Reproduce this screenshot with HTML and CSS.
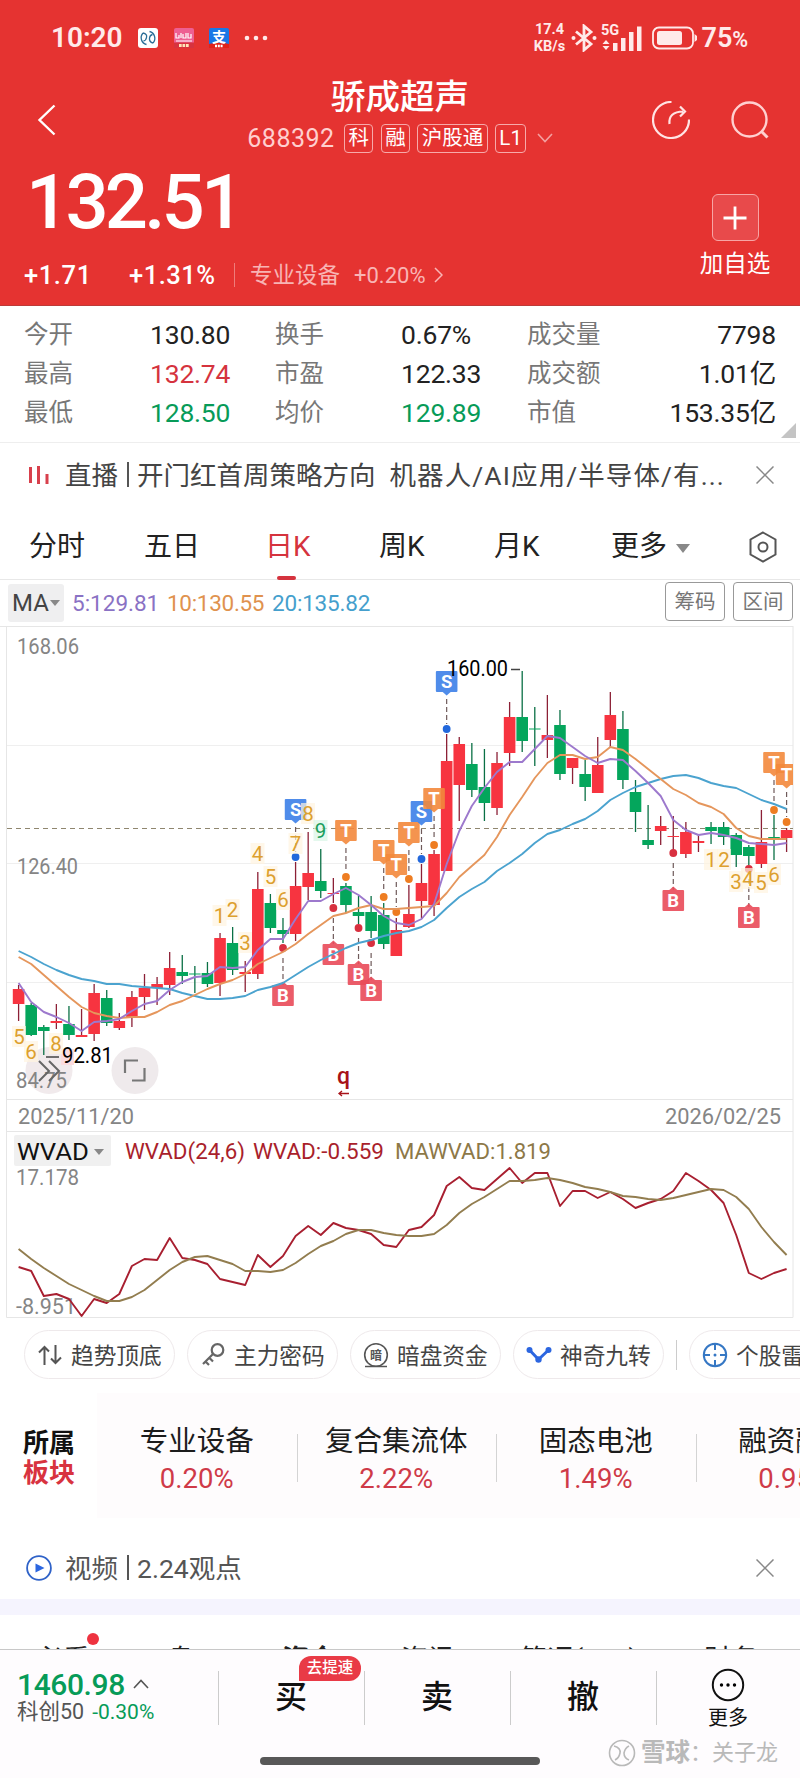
FILE: index.html
```html
<!DOCTYPE html>
<html lang="zh-CN">
	<head>
		<meta charset="UTF-8">
		<title>骄成超声 688392</title>
		<link rel="stylesheet" href="styles.css">
	</head>
	<body>
		<div class="header">
			<div class="status">
				<span class="time">10:20</span>
				<svg class="app" width="20" height="20" viewBox="0 0 20 20">
					<rect width="20" height="20" rx="3" fill="#fff"/>
					<g fill="none" stroke="#2a6d96" stroke-width="1.3"><path d="M8.500 16.500A7 7 0 0 1 5 5M11.500 3.500A7 7 0 0 1 15 15"/><path d="M5 5Q9.500 6 8.500 9.500Q8 12.500 5.500 13M15 15Q11 14 11.500 10Q12 7 14.500 6.500"/></g>
				</svg>
				<svg class="app" width="20" height="20" viewBox="0 0 20 20">
					<rect width="20" height="20" rx="2" fill="#ee5f92"/>
					<path d="M2 5v5h3V7M7 5v5M9 6v4h3V5M14 5v5h3V6M2 13h16" stroke="#fff" stroke-width="1.200" fill="none"/>
					<rect y="14.500" width="20" height="5.500" fill="#d7333f"/><path d="M5 17.500h10" stroke="#ffe4b8" stroke-width="3" stroke-dasharray="2.700 .8"/>
				</svg>
				<svg class="app" width="20" height="20" viewBox="0 0 20 20">
					<rect width="20" height="20" rx="2" fill="#1977e6"/>
					<path d="M0 16q10-2.500 20 0v4H0z" fill="#e2231a"/>
					<text x="10" y="13.500" class="zhi">支</text>
					<path d="M6 18h8" stroke="#fff" stroke-width="2.500" stroke-dasharray="2 .8"/>
				</svg>
				<svg class="dots" width="24" height="6"><g fill="#ffe9ea"><circle cx="3" cy="3" r="2.300"/><circle cx="12" cy="3" r="2.300"/><circle cx="21" cy="3" r="2.300"/></g></svg>
				<div class="net">17.4<br>KB/s</div>
				<svg class="bt" width="26" height="28" viewBox="0 0 26 28"><path d="M5 7.500l15 12.500-7 6V2l7 6L5 20.500" fill="none" stroke="#ffeaea" stroke-width="2.800"/><circle cx="2.500" cy="14" r="2" fill="#ffeaea"/><circle cx="23.500" cy="14" r="2" fill="#ffeaea"/></svg>
				<svg class="signal" width="42" height="30" viewBox="0 0 42 30">
					<text x="0" y="12" class="g5">5G</text>
					<g fill="#ffeaea"><path d="M1.500 21l3.500-4 3.500 4zM1.500 23l3.500 4 3.500-4z"/><rect x="12" y="20" width="4.500" height="8"/><rect x="20" y="15" width="4.500" height="13"/><rect x="28" y="9" width="4.500" height="19"/><rect x="36" y="3.500" width="4.500" height="24.500"/></g>
				</svg>
				<svg class="battery" width="45" height="24" viewBox="0 0 45 24"><rect x="1" y="1.500" width="40" height="21" rx="6" fill="none" stroke="#ffeaea" stroke-width="1.800"/><rect x="5" y="5" width="25" height="14" rx="2.500" fill="#ffeaea"/><path d="M42.500 8v8l2.500-2v-4z" fill="#ffeaea"/></svg>
				<span class="percent">75<small>%</small></span>
			</div>

			<div class="nav">
				<svg class="back" width="20" height="32" viewBox="0 0 20 32"><path d="M17.500 1.500L2.500 16l15 14.500" fill="none" stroke="#fff" stroke-width="2.400"/></svg>
				<div class="name">
					<div class="title">骄成超声</div>
					<div class="code">
						<span class="num">688392</span>
						<span class="tag">科</span>
						<span class="tag">融</span>
						<span class="tag">沪股通</span>
						<span class="tag">L1</span>
						<svg width="16" height="10" viewBox="0 0 16 10"><path d="M1 1l7 7.500L15 1" fill="none" stroke="#f3a0a0" stroke-width="1.600"/></svg>
					</div>
				</div>
				<div class="tools">
					<svg width="38" height="38" viewBox="0 0 38 38" fill="none" stroke="#ffe4e4" stroke-width="2.200"><path d="M19.500 1A18 18 0 1 0 37 18.500"/><path d="M17.500 23c-1-8 4-12.500 13.500-12.500M28 5.500l5 5-5 5"/></svg>
					<svg width="38" height="38" viewBox="0 0 38 38" fill="none" stroke="#ffd0d0" stroke-width="2.400"><circle cx="18.500" cy="18.500" r="17"/><path d="M30.500 30.500l6 6" stroke-width="3"/></svg>
				</div>
			</div>

			<div class="quote">
				<div>
					<div class="price">132.51</div>
					<div class="change">
						<span class="diff">+1.71</span>
						<span class="rate">+1.31%</span>
						<span class="industry">专业设备</span>
						<span class="irate">+0.20%</span>
						<svg width="9" height="16" viewBox="0 0 9 16"><path d="M1 1l7 7-7 7" fill="none" stroke="#f9b5b5" stroke-width="1.500"/></svg>
					</div>
				</div>
				<div class="add">
					<div class="plus"><svg width="24" height="24" viewBox="0 0 24 24"><path d="M12 .5v23M.5 12h23" stroke="#fff" stroke-width="2.800"/></svg></div>
					<span>加自选</span>
				</div>
			</div>
		</div>

		<div class="stats">
			<span>今开</span><b>130.80</b><span>换手</span><b>0.67%</b><span>成交量</span><b class="right">7798</b>
			<span>最高</span><b class="red">132.74</b><span>市盈</span><b>122.33</b><span>成交额</span><b class="right">1.01亿</b>
			<span>最低</span><b class="green">128.50</b><span>均价</span><b class="green">129.89</b><span>市值</span><b class="right">153.35亿</b>
		</div>

		<div class="notice live">
			<svg width="20" height="18" viewBox="0 0 20 18"><path d="M1.500 1v16M9.500 0v18M18 8v10" stroke="#d8404c" stroke-width="3"/></svg>
			<p>直播<i></i>开门红首周策略方向<em>机器人/AI应用/半导体/有...</em></p>
			<svg width="18" height="18" viewBox="0 0 18 18"><path d="M.5 .5l17 17M17.500 .5l-17 17" stroke="#888" stroke-width="1.500"/></svg>
		</div>

		<div class="tabs">
			<span>分时</span>
			<span>五日</span>
			<span class="on">日K</span>
			<span>周K</span>
			<span>月K</span>
			<span class="more">更多</span>
			<svg width="30" height="32" viewBox="0 0 30 32" fill="none" stroke="#555" stroke-width="2"><path d="M15 1.500l12.500 7v15L15 30.500l-12.500-7v-15z"/><circle cx="15" cy="16" r="4.500"/></svg>
		</div>

		<div class="ma">
			<span class="select">MA</span>
			<span class="m5">5:129.81</span>
			<span class="m10">10:130.55</span>
			<span class="m20">20:135.82</span>
			<button>筹码</button>
			<button>区间</button>
		</div>

		<svg id="chart" class="chart" width="800" height="700" viewBox="0 0 800 700"></svg>

		<div class="pills">
			<div class="pill"><svg width="24" height="20" viewBox="0 0 24 20" fill="none" stroke="#555" stroke-width="2"><path d="M6.500 20V2M1 7.500L6.500 2 11 6.500M17.500 0v18M13 13.500l4.500 4.500L23 12.500"/></svg>趋势顶底</div>
			<div class="pill"><svg width="24" height="24" viewBox="0 0 24 24" fill="none" stroke="#666" stroke-width="2.200"><circle cx="16.500" cy="7" r="5.800"/><path d="M12 11L2 21M4 18l4 4M8 14.500l4 4"/></svg>主力密码</div>
			<div class="pill"><svg width="26" height="26" viewBox="0 0 26 26"><circle cx="13" cy="13" r="11.300" fill="none" stroke="#555" stroke-width="1.600"/><path d="M2 24.500h22" stroke="#555" stroke-width="1.500"/><text x="13" y="17.500" class="an">暗</text></svg>暗盘资金</div>
			<div class="pill"><svg width="26" height="18" viewBox="0 0 26 18"><path d="M3.500 4l9 9.500L22.500 4" fill="none" stroke="#2c66e0" stroke-width="3"/><g fill="#2c66e0"><circle cx="3.500" cy="4" r="3"/><circle cx="12.500" cy="13.500" r="3.200"/><circle cx="22.500" cy="4" r="3"/></g></svg>神奇九转</div>
			<i class="bar"></i>
			<div class="pill"><svg width="26" height="26" viewBox="0 0 26 26" fill="none" stroke="#3577c4" stroke-width="2"><circle cx="13" cy="13" r="11.200"/><path d="M13 1v7M13 18v7M1 13h7M18 13h7"/><circle cx="13" cy="13" r="1.500" fill="#3577c4" stroke="none"/></svg>个股雷达</div>
		</div>

		<div class="sectors">
			<div class="belong">所属<br><em>板块</em></div>
			<div class="list">
				<div class="sector">专业设备<b>0.20%</b></div>
				<div class="sector">复合集流体<b>2.22%</b></div>
				<div class="sector">固态电池<b>1.49%</b></div>
				<div class="sector">融资融券<b>0.95%</b></div>
			</div>
		</div>

		<div class="notice video">
			<svg width="26" height="26" viewBox="0 0 26 26"><circle cx="13" cy="13" r="11.900" fill="none" stroke="#2f62c8" stroke-width="1.800"/><path d="M9.500 8.500v9l9-4.500z" fill="#2c66e0"/></svg>
			<p>视频<i></i>2.24观点</p>
			<svg width="18" height="18" viewBox="0 0 18 18"><path d="M.5 .5l17 17M17.500 .5l-17 17" stroke="#888" stroke-width="1.500"/></svg>
		</div>

		<div class="sections">
			<span class="dot">必看</span>
			<span>盘口</span>
			<span class="on">资金</span>
			<span>资讯</span>
			<span>简况(F10)</span>
			<span>财务</span>
		</div>

		<div class="trade">
			<div class="index">
				<div class="point">1460.98<svg width="16" height="10" viewBox="0 0 16 10"><path d="M1 9l7-7.500L15 9" fill="none" stroke="#555" stroke-width="1.600"/></svg></div>
				<div class="sub">科创50<b>-0.30%</b></div>
			</div>
			<div class="act">买<span class="badge">去提速</span></div>
			<div class="act">卖</div>
			<div class="act">撤</div>
			<div class="act menu">
				<svg width="34" height="34" viewBox="0 0 34 34"><circle cx="17" cy="17" r="15.200" fill="none" stroke="#111" stroke-width="2"/><circle cx="10.500" cy="17" r="1.700"/><circle cx="17" cy="17" r="1.700"/><circle cx="23.500" cy="17" r="1.700"/></svg>
				更多
			</div>
		</div>
		<div class="bottom">
			<div class="home"></div>
			<div class="watermark">
				<svg width="28" height="28" viewBox="0 0 28 28" fill="none" stroke="#b9b9b9" stroke-width="1.600"><circle cx="14" cy="14" r="12.500"/><path d="M6 7q7 2 6 7-1 5-5 7M21 21q-5-2-5-7 1-5 5-7"/></svg>
				<b>雪球</b>：关子龙
			</div>
		</div>

		<script src="chart.js"></script>
	</body>
</html>
```
FILE: styles.css
```css
*{
	box-sizing: border-box;
}

body{
	margin: 0;
	width: 800px;
	height: 1778px;
	overflow: hidden;
	background: #fff;
	color: #222;
	font-family: Roboto, "Noto Sans CJK SC", sans-serif;
}

svg{
	display: block;
	flex: none;
}

i, em{
	font-style: normal;
}

b{
	font-weight: normal;
}

/* header */
.header{
	height: 306px;
	background: #e53331;
	border-bottom: 1px solid #bd3a38;
	color: #fff;
}

.status{
	display: flex;
	align-items: center;
	height: 75px;
	padding-left: 51px;
	color: #ffeaea;
}

.time{
	width: 87px;
	font-size: 28px;
	font-weight: 600;
}

.app{
	margin-right: 15.500px;
}

.zhi{
	font: bold 14px "Noto Sans CJK SC";
	fill: #fff;
	text-anchor: middle;
}

.dots{
	margin-left: -1px;
}

.net{
	width: 34px;
	margin-left: 265px;
	text-align: center;
	font-size: 14.500px;
	line-height: 17px;
	font-weight: bold;
	white-space: nowrap;
}

.bt{
	margin-left: 4px;
}

.signal{
	margin-left: 4px;
}

.g5{
	font: bold 14.500px Roboto;
	fill: #ffeaea;
}

.battery{
	margin-left: 9px;
}

.percent{
	margin-left: 5px;
	font-size: 27px;
	font-weight: 600;
}

.percent small{
	font-size: 21.500px;
}

.nav{
	display: grid;
	grid-template-columns: 1fr auto 1fr;
	align-items: center;
	height: 86px;
	padding: 4px 31px 0;
}

.back{
	margin-left: 6px;
}

.name{
	margin-top: -10px;
}

.title{
	height: 46px;
	line-height: 45px;
	text-align: center;
	font-size: 34.500px;
	font-weight: 500;
}

.code{
	display: flex;
	align-items: center;
	height: 34px;
	font-size: 20.500px;
}

.code .num{
	width: 97px;
	font-size: 25px;
	letter-spacing: .5px;
	color: #ffcfcf;
}

.tag{
	height: 29px;
	margin-right: 7.500px;
	padding: 0 3.300px;
	border: 1px solid #f7aaaa;
	border-radius: 4px;
	line-height: 26px;
}

.tag + svg{
	margin-left: 3px;
}

.tools{
	display: flex;
	justify-content: flex-end;
	gap: 41px;
}

.quote{
	display: flex;
	justify-content: space-between;
	padding: 0 25px 0 24px;
}

.price{
	height: 82px;
	padding-left: 2px;
	line-height: 82px;
	font-size: 76px;
	font-weight: 500;
	letter-spacing: -3.800px;
}

.change{
	display: flex;
	align-items: center;
	height: 30px;
	margin-top: 17px;
	font-size: 25.500px;
	font-weight: 500;
}

.diff{
	width: 105px;
	letter-spacing: .6px;
}

.rate{
	width: 105px;
	letter-spacing: .5px;
}

.industry{
	padding-left: 15px;
	border-left: 1px solid #ef7c7a;
	width: 120px;
	line-height: 24px;
	font-size: 22.500px;
	font-weight: normal;
	color: #f8b4b4;
}

.irate{
	width: 80px;
	font-size: 22px;
	font-weight: normal;
	color: #f9b5b5;
}

.add{
	display: flex;
	flex-direction: column;
	align-items: center;
	padding-top: 33px;
	width: 80px;
	font-size: 23.500px;
	line-height: 47px;
}

.plus{
	display: flex;
	align-items: center;
	justify-content: center;
	width: 47px;
	height: 47px;
	background: #e84a4b;
	border: 1px solid #f7a5a5;
	border-radius: 6px;
}

/* numbers of the day */
.stats{
	position: relative;
	display: grid;
	grid-template-columns: 126px 125px 126px 126px 90px 1fr;
	grid-auto-rows: 39px;
	height: 137px;
	padding: 8.500px 24px 0 24px;
	border-bottom: 1px solid #eee;
	line-height: 39px;
	font-size: 24.500px;
	color: #777;
}

.stats::after{
	content: "";
	position: absolute;
	right: 4px;
	bottom: 4px;
	border-left: 15px solid transparent;
	border-bottom: 15px solid #c4c4c4;
}

.stats b{
	font-size: 26.500px;
	letter-spacing: -.2px;
	color: #222;
}

.stats .right{
	text-align: right;
}

.stats b.red{
	color: #d5333e;
}

.stats b.green{
	color: #079b58;
}

/* notice lines */
.notice{
	display: flex;
	align-items: center;
	height: 62px;
	padding: 0 26px 0 29px;
	font-size: 26.500px;
	color: #444;
}

.notice p{
	display: flex;
	align-items: center;
	flex: 1;
	margin: -4px 0 0 16px;
	white-space: nowrap;
}

.notice i{
	width: 2px;
	height: 25px;
	margin: 3px 8px 0 9px;
	background: #555;
}

.notice em{
	margin-left: 14px;
	letter-spacing: 1.100px;
}

.live{
	margin-top: 1px;
}

/* period tabs */
.tabs{
	display: flex;
	align-items: center;
	height: 74px;
	padding: 8px 0 0 29px;
	border-bottom: 1px solid #e8e8e8;
	font-size: 28px;
}

.tabs span{
	position: relative;
	width: 115px;
	line-height: 66px;
}

.tabs .on{
	width: 114px;
	margin-left: 6px;
	color: #d5333e;
}

.tabs .on::after{
	content: "";
	position: absolute;
	left: 12px;
	bottom: 0;
	width: 19px;
	height: 4px;
	border-radius: 2px;
	background: #d5333e;
}

.tabs .more{
	width: 137px;
	margin-left: 2px;
}

.more::after{
	content: "";
	display: inline-block;
	margin: 0 0 3px 9px;
	border: 7px solid transparent;
	border-top: 9px solid #888;
	border-bottom: 0;
}

.ma{
	display: flex;
	align-items: center;
	height: 46px;
	padding: 0 7px 1px 8px;
	font-size: 22.500px;
}

.select{
	width: 56px;
	height: 38px;
	padding-left: 4px;
	margin-right: 8px;
	background: #efeff0;
	border-radius: 3px;
	line-height: 38px;
	font-size: 24px;
	color: #444;
	white-space: nowrap;
}

.select::after{
	content: "";
	display: inline-block;
	margin: 0 0 5px 1px;
	border: 5px solid transparent;
	border-top: 6px solid #888;
	border-bottom: 0;
}

.m5{
	width: 95px;
	color: #8a72c4;
}

.m10{
	width: 105px;
	color: #e0924e;
	letter-spacing: -.3px;
}

.m20{
	flex: 1;
	color: #459fcd;
	letter-spacing: -.2px;
}

.ma button{
	width: 60px;
	height: 39px;
	margin: -2px 0 0 8px;
	padding: 0 0 3px;
	border: 1px solid #999;
	border-radius: 4px;
	background: #fff;
	font: 20.500px "Noto Sans CJK SC", sans-serif;
	color: #777;
}

/* chart */
.chart{
	margin-top: -6px;
	height: 700px;
}

.frame{
	fill: none;
	stroke: #e6e6e6;
	stroke-width: 1;
}

.grid{
	stroke: #efefef;
}

.axis{
	font-size: 21.500px;
	fill: #858585;
}

.peak{
	font-size: 21.500px;
	fill: #000;
}

.wvad{
	font-size: 23px;
	fill: #111;
}

.bold{
	font-size: 23px;
	font-weight: 500;
	fill: #a81218;
}

.turn{
	font-size: 20.500px;
	text-anchor: middle;
	fill: #dda02e;
}

.turn.down{
	fill: #1a9e5c;
}

.flag{
	font-size: 18.500px;
	font-weight: bold;
	text-anchor: middle;
	fill: #fff;
}

.line{
	fill: none;
	stroke-width: 1.900;
	stroke-linejoin: round;
}

/* tools under the chart */
.pills{
	display: flex;
	align-items: center;
	gap: 12px;
	height: 49px;
	margin-top: 10px;
	padding-left: 24px;
	overflow: hidden;
}

.pill{
	display: flex;
	align-items: center;
	flex: none;
	width: 151px;
	height: 49px;
	padding-left: 12px;
	border: 1px solid #eee9eb;
	border-radius: 25px;
	font-size: 22.700px;
	color: #444;
	white-space: nowrap;
}

.pill svg{
	width: 26px;
	margin-right: 8px;
}

.bar{
	flex: none;
	width: 1px;
	height: 30px;
	background: #ccc;
}

.an{
	font: bold 12px "Noto Sans CJK SC";
	text-anchor: middle;
	fill: #555;
}

/* sectors */
.sectors{
	display: flex;
	height: 125px;
	margin-top: 14px;
	overflow: hidden;
}

.belong{
	width: 97px;
	flex: none;
	padding: 35px 0 0 23px;
	line-height: 30px;
	font-size: 26px;
	font-weight: bold;
	color: #111;
}

.belong em{
	color: #d8333f;
}

.list{
	display: flex;
	flex: none;
	background: #fefcfd;
}

.sector{
	width: 199.500px;
	padding-top: 30px;
	text-align: center;
	line-height: 37px;
	font-size: 28.500px;
	color: #1c1c1c;
}

.sector b{
	display: block;
	font-size: 27.500px;
	color: #cf3a48;
}

.sector + .sector{
	background: linear-gradient(#d4d4d4, #d4d4d4) 0 41px / 1px 48px no-repeat;
}

.video{
	height: 81px;
	padding: 19px 26px 0 26px;
	color: #555;
}

.video p{
	margin-left: 13px;
}

.sections{
	display: flex;
	height: 50px;
	padding: 24px 0 0 36px;
	border-top: 16px solid #f5f4fe;
	overflow: hidden;
	white-space: nowrap;
	line-height: 42px;
	font-size: 27px;
	color: #222;
}

.sections span{
	position: relative;
	flex: none;
	width: 119px;
}

.sections span:first-child{
	width: 131px;
}

.sections span:nth-child(2){
	width: 115px;
}

.sections span:nth-child(5){
	width: 184px;
}

.sections .on{
	font-weight: bold;
}

.dot::after{
	content: "";
	position: absolute;
	left: 51px;
	top: -6px;
	width: 12px;
	height: 12px;
	border-radius: 50%;
	background: #ee3340;
}

/* trade bar */
.trade{
	display: flex;
	height: 90px;
	border-top: 1px solid #c8c8c8;
	background: #fefcfe;
}

.index{
	width: 218px;
	flex: none;
	padding: 16px 0 0 17px;
}

.point{
	display: flex;
	align-items: center;
	gap: 8px;
	height: 36px;
	font-size: 30px;
	font-weight: 500;
	letter-spacing: -.4px;
	color: #079b58;
}

.sub{
	line-height: 20px;
	font-size: 21.500px;
	color: #555;
}

.sub b{
	margin-left: 8px;
	font-size: 21px;
	color: #079b58;
}

.act{
	position: relative;
	flex: none;
	width: 146px;
	line-height: 94px;
	text-align: center;
	font-size: 32px;
	font-weight: 500;
	color: #111;
	background: linear-gradient(#ccc, #ccc) 0 21px / 1px 54px no-repeat;
}

.badge{
	position: absolute;
	left: 81px;
	top: 6px;
	width: 62px;
	height: 25px;
	border-radius: 12px 12px 12px 0;
	background: #e93a46;
	line-height: 24px;
	font-size: 15.500px;
	color: #fff;
}

.menu{
	width: 144px;
	padding-top: 18px;
	font-size: 20px;
	font-weight: normal;
	line-height: 32px;
}

.menu svg{
	margin: 0 auto;
}

.bottom{
	position: relative;
	height: 39px;
	padding-top: 18px;
	background: #fefcfe;
}

.home{
	width: 280px;
	height: 8px;
	margin: 0 auto;
	border-radius: 4px;
	background: #585858;
}

.watermark{
	position: absolute;
	right: 22px;
	top: 0;
	display: flex;
	align-items: center;
	line-height: 28px;
	font-size: 22px;
	color: #b9b9b9;
	white-space: nowrap;
}

.watermark svg{
	margin-right: 5px;
}

.watermark b{
	font-size: 24.500px;
	font-weight: bold;
}
```
FILE: chart.js
```js
var chart=document.getElementById("chart");
var out="";

// high, top, bottom, low ; r = up, g = down
var candles=[
	["r",365,369,384,401],["g",383,385,415,416],["g",405,407,411,435],["r",384,401,403,409],
	["g",386,404,415,420],["r",389,415,417,417],["r",364,373,414,421],["g",370,378,403,406],
	["r",393,401,408,410],["r",371,377,398,407],["r",354,368,377,390],["r",357,364,368,385],
	["r",332,348,365,375],["g",335,352,356,364],["g",346,353.5,354.5,373],["g",342,353,364,367],
	["r",313,318,363,376],["g",307,323,350,355],["r",341,352,354,372],["r",252,269,354,359],
	["g",274,283,308,313],["g",298,310,314,323],["r",242,266,314,321],["r",212,253,267,280],
	["g",229,261,271,278],["r",258,273,274,283],["g",263,266,285,293],["g",276,292,296,304],
	["g",276,292,311,318],["g",283,295,324,329],["r",298,310,336,336],["r",265,294,307,308],
	["r",244,263,281,298],["r",230,234,285,296],["r",114,141,251,251],["r",117,124,165,201],
	["g",123,144,170,177],["g",129,167,183,201],["r",132,143,188,195],["r",82,97,133,146],
	["g",51,97,121,132],["g",87,108.5,109.5,146],["r",75,115,120,138],["g",90,105,154,160],
	["r",138,138,148,164],["g",140,154,167,181],["r",117,145,173,173],["r",72,95,120,127],
	["g",91,109,160,169],["g",160,172,192,212],["g",185,220,225,229],["r",196,206,211,225],
	["r",196,216,217,233],["r",202,212,234,238],["r",215,221,223,232],["g",202,207,211,224],
	["g",202,207,217,225],["g",213,215,235,247],["g",225,227,236,245],["r",190,222,244,248],
	["g",195,217,219,240],["r",208,210,218,232]
];

var ma5=[363,382,392,397,403,411,402,401,399,391,384,381,370,362,357,356,347,348,347,330,319,319,299,281,281,274,268,275,285,296,303,305,299,284,244,211,186,168,152,142,142,129,116,118,127,136,143,139,140,151,163,176,200,210,215,213,215,218,223,224,225,223];
var ma10=[337,344,355,366,377,387,393,396,398,397,397,392,385,381,375,369,364,360,354,344,338,332,324,314,305,296,293,288,285,289,289,288,287,286,273,257,246,235,217,195,177,158,143,135,135,139,137,127,130,139,149,159,169,175,183,187,194,208,216,219,219,219];
var ma20=[331,337,344,350,355,359,361,364,364,366,367,368,369,373,376,379,379,378,376,370,367,363,355,347,340,334,328,323,320,316,313,311,307,300,288,277,269,262,251,243,234,223,214,210,204,199,191,180,173,167,163,159,156,155,158,163,166,168,174,180,184,189];
var wvad=[647,651,676,674,679,696,679,683,674,646,639,640,618,638,640,644,659,662,665,635,647,636,616,606,615,603,608,610,614,625,627,610,607,595,566,557,568,570,559,548,563,553,553,586,571,571,578,572,579,588,583,579,571,553,561,570,583,615,653,659,653,649];
var mawvad=[629,639,648,656,664,670,676,681,681,677,670,660,650,642,637,636,640,644,651,651,652,650,643,634,626,621,614,610,610,613,615,616,616,614,605,593,584,577,569,561,561,560,558,560,563,567,569,572,576,577,579,580,578,575,572,569,570,577,589,607,622,635];

// letter, candle, top of the box, dot
var flags=[
	["S",22,179,237],["S",34,51,109],["T",26,200,257],["T",29,220,277],["T",30,234,292],
	["T",31,202,259],["S",32,181,239],["T",33,168,225],["T",60,132,190],["T",61,144,202],
	["B",21,365,328],["B",25,324,288],["B",27,344,308],["B",28,360,323],["B",52,270,233],["B",58,287,249]
];
var flagColor={S:"#3d80e8",T:"#f3893c",B:"#e94b59"};
var dotColor={S:"#2268dc",T:"#ee7d22",B:"#d8303f"};

// number, x, baseline
var turns=[
	[5,19,424],[6,31,439],[8,56,431],[1,219.5,303],[2,232.5,297],[3,245,330],[4,257.5,241],
	[5,270.5,264],[6,283,287],[7,295.5,231],[8,308,201],[9,320.5,218],[1,711,247],[2,724,247],
	[3,736,269],[4,748,266],[5,761,270],[6,774,262]
];

function px(i) {
	return 18.600 + i*12.59;
}

function text(cls, x, y, str, w, color) {
	out+='<text class="'+cls+'" x="'+x+'" y="'+y+'"';
	if(w) out+=' textLength="'+w+'" lengthAdjust="spacingAndGlyphs"';
	if(color) out+=' style="fill:'+color+'"';
	out+='>'+str+'</text>';
}

function line(data, color) {
	var pts=[];
	for(var i=0; i<data.length; i++) pts.push(px(i).toFixed(1)+","+data[i]);
	out+='<polyline class="line" stroke="'+color+'" points="'+pts.join(" ")+'"/>';
}

// grid
out+='<path class="frame grid" d="M7 125.500H793M7 243.500H793M7 362.500H793"/>';
out+='<path class="frame" d="M0 6.500H793M6.500 6V697.500H793V6M7 479.500H793M7 511.500H793"/>';
out+='<path d="M7 208.500H793" stroke="#8f866f" stroke-dasharray="5 4"/>';

// round buttons
out+='<circle cx="49" cy="450.500" r="23.500" fill="#f1eaec"/><circle cx="135" cy="450.500" r="23.500" fill="#efeaec"/>';
out+='<rect x="61" y="429" width="13" height="16" fill="#fcdcdf"/>';

text("axis",17,34,"168.06",62);
text("axis",17,253.500,"126.40",61);
text("axis",16,468,"84.75",51);

for(var i=0; i<candles.length; i++) {
	var c=candles[i];
	var x=px(i);
	out+='<path d="M'+x+' '+c[1]+'V'+c[4]+'" stroke="'+(c[0]=="r"?"#8c2036":"#0a7045")+'" stroke-width="1.300"/>';
	out+='<rect x="'+(x-5.8)+'" y="'+c[2]+'" width="11.600" height="'+(c[3]-c[2])+'" fill="'+(c[0]=="r"?"#f73440":"#04a65c")+'"/>';
}

out+='<clipPath id="area"><rect x="7" y="7" width="786" height="472"/></clipPath><g clip-path="url(#area)">';
for(var i=0; i<flags.length; i++) {
	var f=flags[i];
	var x=px(f[1]);
	var up=f[0]=="B";
	var y=f[2];
	out+='<path d="M'+x+' '+(up?f[3]+10:y+28)+'V'+(up?y:f[3]-5)+'" stroke="#6f5a5a" stroke-width="1.200" stroke-dasharray="5 3"/>';
	out+='<circle cx="'+x+'" cy="'+f[3]+'" r="3.900" fill="'+dotColor[f[0]]+'"/>';
	out+='<g opacity=".9"><rect x="'+(x-10.8)+'" y="'+y+'" width="21.600" height="21" rx="1" fill="'+flagColor[f[0]]+'"/>';
	out+='<path d="M'+(x-4)+' '+(up?y:y+21)+'h8l-4 '+(up?-3.5:3.5)+'z" fill="'+flagColor[f[0]]+'"/></g>';
	text("flag",x,y+17,f[0]);
}
out+='</g>';

for(var i=0; i<turns.length; i++) {
	var t=turns[i];
	out+='<rect x="'+(t[1]-7)+'" y="'+(t[2]-18)+'" width="14" height="21" fill="'+(t[0]==9?"#d9f5e6":"#fff4e0")+'" opacity=".7"/>';
}

line(ma20,"#4ba3cf");
line(ma10,"#e5965c");
line(ma5,"#9d79cd");

for(var i=0; i<turns.length; i++) {
	text(turns[i][0]==9?"turn down":"turn",turns[i][1],turns[i][2],turns[i][0]);
}

out+='<path d="M46 437h13M511 49.500h9" stroke="#444" stroke-width="1.300"/>';
text("peak",62,443,"92.81",51);
text("peak",447,55.500,"160.00",61);

out+='<path d="M39 441l10 10-10 10M49 441l10 10-10 10" fill="none" stroke="#666" stroke-width="2"/>';
out+='<path d="M125 453v-12.500h13M132 460.500h12.500V448" fill="none" stroke="#777" stroke-width="2.200"/>';
text("bold",337,464,"q");
out+='<path d="M349 473.500H339M342 471l-3 2.500 3 2.500" fill="none" stroke="#a81218" stroke-width="1.300"/>';

// dates
text("axis",18,504,"2025/11/20",116);
text("axis",665,504,"2026/02/25",116);

// wvad
out+='<rect x="14" y="515" width="97" height="31" rx="2" fill="#f0f0f0"/>';
text("wvad",17,539.500,"WVAD",72);
out+='<path d="M94 529h10l-5 6z" fill="#888"/>';
text("axis",125,539,"WVAD(24,6)",120,"#a91f2c");
text("axis",253,539,"WVAD:-0.559",131,"#a91f2c");
text("axis",395,539,"MAWVAD:1.819",156,"#8d7847");
text("axis",16,565,"17.178",63);
text("axis",16,694,"-8.951",60);
line(wvad,"#a81f30");
line(mawvad,"#927d4f");

chart.innerHTML=out;
```
